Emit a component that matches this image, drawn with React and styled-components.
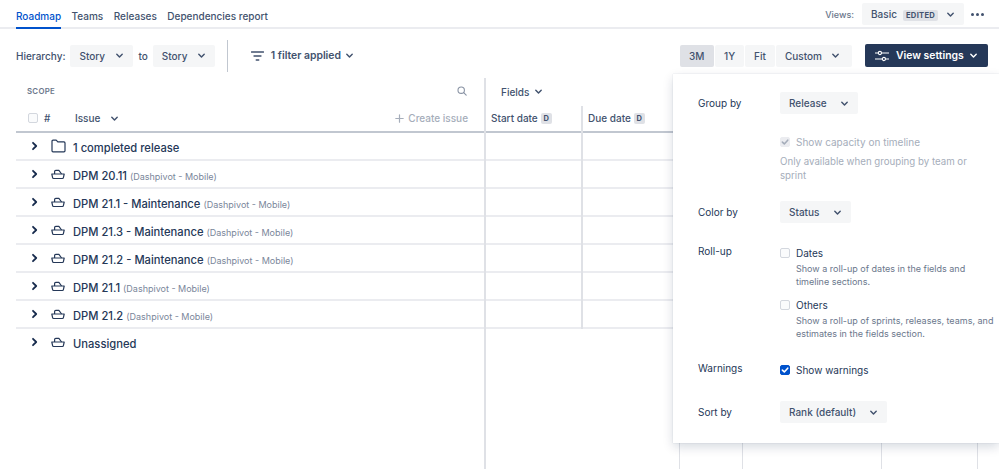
import React from 'react';
import styled, { createGlobalStyle } from 'styled-components';

const GlobalStyle = createGlobalStyle`
  html, body {
    margin: 0;
    padding: 0;
    background: #fff;
  }
  body {
    font-family: Inter, "Liberation Sans", sans-serif;
    color: #253858;
  }
`;

const Page = styled.div`
  position: relative;
  width: 999px;
  height: 469px;
  overflow: hidden;
`;

const TopBar = styled.div`
  display: flex;
  align-items: flex-start;
  justify-content: space-between;
  height: 29px;
  box-sizing: border-box;
  padding: 0 11px 0 16px;
  border-bottom: 2px solid #ebecf0;
`;

const Tabs = styled.div`
  display: flex;
  gap: 10.5px;
`;

const Tab = styled.div`
  height: 29px;
  box-sizing: border-box;
  padding-top: 9px;
  font-size: 10px;
  font-weight: 500;
  line-height: 14px;
  color: ${p => (p.$active ? '#0052cc' : '#42526e')};
  border-bottom: 2px solid ${p => (p.$active ? '#0052cc' : 'transparent')};
`;

const Views = styled.div`
  display: flex;
  align-items: center;
  padding-top: 3px;
`;

const ViewsLabel = styled.span`
  font-size: 9px;
  font-weight: 500;
  color: #6b778c;
  margin-right: 8px;
`;

const Select = styled.div`
  display: inline-flex;
  align-items: center;
  justify-content: space-between;
  box-sizing: border-box;
  width: ${p => p.$w}px;
  height: 22px;
  padding: 0 ${p => p.$pr || 9}px 0 9px;
  background: ${p => (p.$active ? '#dfe1e6' : '#f5f6f7')};
  border-radius: 2px;
  font-size: 10px;
  font-weight: 500;
  color: #42526e;
  white-space: nowrap;
`;

const Badge = styled.span`
  background: #dfe1e6;
  border-radius: 2px;
  padding: 1px 3px;
  font-size: 7.6px;
  font-weight: 700;
  letter-spacing: 0.3px;
  color: #42526e;
  margin-left: 6px;
`;

const More = styled.div`
  display: flex;
  gap: 2px;
  margin-left: 7px;
  margin-right: 4px;
  span {
    width: 3px;
    height: 3px;
    border-radius: 50%;
    background: #42526e;
  }
`;

const Toolbar = styled.div`
  display: flex;
  align-items: center;
  justify-content: space-between;
  height: 49px;
  padding: 4px 11px 0 16px;
  box-sizing: border-box;
`;

const Group = styled.div`
  display: flex;
  align-items: center;
`;

const Label = styled.span`
  font-size: 10px;
  font-weight: 500;
  color: #42526e;
  margin: 0 ${p => p.$mr || 0}px 0 ${p => p.$ml || 0}px;
`;

const Divider = styled.div`
  width: 1px;
  height: 32px;
  background: #c1c7d0;
  margin: 0 23px 0 12px;
`;

const FilterText = styled.span`
  font-size: 10.4px;
  font-weight: 600;
  color: #42526e;
  margin: 0 4px 0 7px;
`;

const Segments = styled.div`
  display: flex;
  gap: 1px;
  margin-right: 13px;
`;

const SettingsButton = styled.div`
  display: flex;
  align-items: center;
  box-sizing: border-box;
  width: 123px;
  height: 23px;
  padding: 0 10px;
  background: #253858;
  border-radius: 2px;
  color: #fff;
  font-size: 10.4px;
  font-weight: 600;
  white-space: nowrap;
  span {
    margin: 0 5px 0 7px;
  }
`;

const Board = styled.div`
  display: flex;
  padding-left: 16px;
  height: 391px;
`;

const ScopeColumn = styled.div`
  width: 468px;
  flex: none;
  border-right: 2px solid #dfe1e6;
`;

const FieldsColumn = styled.div`
  width: 193px;
  flex: none;
`;

const Timeline = styled.div`
  display: flex;
  flex: 1;
`;

const TimelineCell = styled.div`
  width: ${p => p.$w}px;
  flex: none;
  border-left: 1px solid #dfe1e6;
  box-sizing: border-box;
`;

const ScopeTitle = styled.div`
  display: flex;
  align-items: center;
  justify-content: space-between;
  height: 28px;
  padding: 0 17px 3px 11px;
  box-sizing: border-box;
  font-size: 7.8px;
  font-weight: 600;
  letter-spacing: 0.3px;
  color: #6b778c;
`;

const HeadRow = styled.div`
  display: flex;
  align-items: center;
  height: 27px;
  box-sizing: border-box;
  border-bottom: 2px solid #c1c7d0;
  padding: 0 16px 1px 12px;
`;

const CheckBox = styled.span`
  display: inline-flex;
  align-items: center;
  justify-content: center;
  flex: none;
  width: 10px;
  height: 10px;
  box-sizing: border-box;
  border: 1px solid ${p => (p.$on ? '#0052cc' : p.$off ? '#ebecf0' : '#d3d7de')};
  border-radius: 2px;
  background: ${p => (p.$on ? '#0052cc' : p.$off ? '#ebecf0' : '#fafbfc')};
`;

const Hash = styled.span`
  font-size: 10px;
  font-weight: 500;
  color: #42526e;
  margin-left: 6px;
  width: 31px;
`;

const IssueHead = styled.span`
  font-size: 10px;
  font-weight: 500;
  color: #42526e;
  margin-right: 10px;
`;

const CreateIssue = styled.span`
  display: flex;
  align-items: center;
  gap: 4px;
  margin-left: auto;
  font-size: 10px;
  font-weight: 500;
  color: #a5adba;
`;

const Row = styled.div`
  display: flex;
  align-items: center;
  height: 28px;
  box-sizing: border-box;
  border-bottom: 2px solid ${p => (p.$last ? 'transparent' : '#ebecf0')};
  padding: 4px 0 0 15px;
`;

const RowArrow = styled.span`
  display: inline-flex;
  margin-bottom: 4px;
`;

const RowIcon = styled.span`
  display: inline-flex;
  align-items: center;
  justify-content: center;
  width: 16px;
  margin: 0 7px 4px 11px;
`;

const RowText = styled.div`
  display: flex;
  align-items: baseline;
`;

const RowTitle = styled.span`
  font-size: 11.2px;
  font-weight: 500;
  color: #253858;
`;

const RowProject = styled.span`
  font-size: 9px;
  font-weight: 400;
  color: #7a869a;
  margin-left: 3px;
`;

const FieldsTitle = styled.div`
  display: flex;
  align-items: center;
  height: 28px;
  padding: 0 0 1px 15px;
  box-sizing: border-box;
  font-size: 10px;
  font-weight: 500;
  color: #42526e;
  span {
    margin-right: 5px;
  }
`;

const FieldsBody = styled.div`
  display: flex;
`;

const FieldCol = styled.div`
  width: ${p => p.$w}px;
  flex: none;
  border-right: ${p => (p.$last ? '0' : '2px solid #dfe1e6')};
`;

const FieldHead = styled.div`
  display: flex;
  align-items: center;
  height: 27px;
  box-sizing: border-box;
  border-bottom: 2px solid #c1c7d0;
  padding: 0 0 1px 5px;
  font-size: 10px;
  font-weight: 500;
  color: #42526e;
`;

const DBadge = styled.span`
  display: inline-flex;
  align-items: center;
  justify-content: center;
  width: 11px;
  height: 11px;
  border-radius: 2px;
  margin-left: 3px;
  background: #dfe1e6;
  font-size: 7.5px;
  font-weight: 700;
`;

const FieldCell = styled.div`
  height: 28px;
  box-sizing: border-box;
  border-bottom: 2px solid #ebecf0;
`;

const Panel = styled.div`
  position: absolute;
  top: 74px;
  left: 673px;
  width: 326px;
  height: 369px;
  box-sizing: border-box;
  padding: 18px 0 0 25px;
  background: #fff;
  box-shadow: 0 4px 10px rgba(9, 30, 66, 0.16), 0 0 1px rgba(9, 30, 66, 0.2);
`;

const PanelRow = styled.div`
  display: grid;
  grid-template-columns: 82px 1fr;
  margin-top: ${p => p.$mt || 0}px;
`;

const PanelLabel = styled.div`
  font-size: 10px;
  font-weight: 400;
  line-height: 22px;
  margin-top: ${p => p.$mt || 0}px;
  color: #253858;
`;

const CheckLine = styled.div`
  display: flex;
  align-items: center;
  gap: 6px;
  font-size: 10px;
  font-weight: 400;
  line-height: 14px;
  color: ${p => (p.$muted ? '#a5adba' : '#253858')};
`;

const Hint = styled.div`
  font-size: ${p => (p.$muted ? 9.7 : 9)}px;
  line-height: ${p => (p.$muted ? 13.5 : 13)}px;
  margin: ${p => p.$mt}px 0 0 ${p => p.$ml || 0}px;
  width: ${p => p.$width}px;
  color: ${p => (p.$muted ? '#a5adba' : '#6b778c')};
`;

const RollGap = styled.div`
  height: 10px;
`;

const Chevron = ({ size = 9, color = '#42526e', width = 1.6 }) => (
  <svg width={size} height={size} viewBox="0 0 10 10" fill="none">
    <path d="M2 3.6 5 6.6 8 3.6" stroke={color} strokeWidth={width} strokeLinecap="round" strokeLinejoin="round" />
  </svg>
);

const RowChevron = () => (
  <svg width="8" height="10" viewBox="0 0 8 10" fill="none">
    <path d="M2 1.8 5.2 5 2 8.2" stroke="#172b4d" strokeWidth="1.8" strokeLinecap="round" strokeLinejoin="round" />
  </svg>
);

const FolderIcon = () => (
  <svg width="15" height="14" viewBox="0 0 15 14" fill="none">
    <path d="M1 2.2a1 1 0 0 1 1-1h3.2l1.6 1.7H13a1 1 0 0 1 1 1v7.9a1 1 0 0 1-1 1H2a1 1 0 0 1-1-1z" stroke="#253858" strokeWidth="1.2" strokeLinejoin="round" />
  </svg>
);

const ShipIcon = () => (
  <svg width="14" height="11" viewBox="0 0 14 11" fill="none">
    <path d="M3.6 5V2.6a1.2 1.2 0 0 1 1.2-1.2h3.1L10.6 5" stroke="#253858" strokeWidth="1.2" strokeLinejoin="round" />
    <path d="M.8 5h12.4l-.8 3.7a1 1 0 0 1-1 .8H2.6a1 1 0 0 1-1-.8z" stroke="#253858" strokeWidth="1.2" strokeLinejoin="round" />
  </svg>
);

const FilterIcon = () => (
  <svg width="13" height="10" viewBox="0 0 13 10" fill="none">
    <path d="M.5 1h12M3 5h7M5.2 9h2.6" stroke="#42526e" strokeWidth="1.3" strokeLinecap="round" />
  </svg>
);

const SlidersIcon = () => (
  <svg width="14" height="12" viewBox="0 0 14 12" fill="none">
    <path d="M.5 3h2.5M6.8 3h6.7M.5 9h6.5M10.8 9h2.7" stroke="#fff" strokeWidth="1.2" strokeLinecap="round" />
    <circle cx="4.9" cy="3" r="1.6" stroke="#fff" strokeWidth="1.1" />
    <circle cx="8.9" cy="9" r="1.6" stroke="#fff" strokeWidth="1.1" />
  </svg>
);

const SearchIcon = () => (
  <svg width="10" height="10" viewBox="0 0 10 10" fill="none">
    <circle cx="4.2" cy="4.2" r="3.2" stroke="#8993a4" strokeWidth="1.1" />
    <path d="M6.7 6.7 9.2 9.2" stroke="#8993a4" strokeWidth="1.1" strokeLinecap="round" />
  </svg>
);

const PlusIcon = () => (
  <svg width="9" height="9" viewBox="0 0 9 9" fill="none">
    <path d="M4.5.8v7.4M.8 4.5h7.4" stroke="#a5adba" strokeWidth="1.2" strokeLinecap="round" />
  </svg>
);

const Tick = ({ color = '#fff' }) => (
  <svg width="8" height="8" viewBox="0 0 7 7" fill="none">
    <path d="M1.2 3.6 2.9 5.2 5.9 1.9" stroke={color} strokeWidth="1.4" strokeLinecap="round" strokeLinejoin="round" />
  </svg>
);

const rows = [
  { title: '1 completed release', folder: true },
  { title: 'DPM 20.11', project: true },
  { title: 'DPM 21.1 - Maintenance', project: true },
  { title: 'DPM 21.3 - Maintenance', project: true },
  { title: 'DPM 21.2 - Maintenance', project: true },
  { title: 'DPM 21.1', project: true },
  { title: 'DPM 21.2', project: true },
  { title: 'Unassigned', last: true },
];

const cells = rows.slice(0, 7);

const App = () => (
  <Page>
    <GlobalStyle />
    <TopBar>
      <Tabs>
        <Tab $active>Roadmap</Tab>
        <Tab>Teams</Tab>
        <Tab>Releases</Tab>
        <Tab>Dependencies report</Tab>
      </Tabs>
      <Views>
        <ViewsLabel>Views:</ViewsLabel>
        <Select $w={102}>
          <span>
            Basic<Badge>EDITED</Badge>
          </span>
          <Chevron />
        </Select>
        <More>
          <span />
          <span />
          <span />
        </More>
      </Views>
    </TopBar>

    <Toolbar>
      <Group>
        <Label $mr={5}>Hierarchy:</Label>
        <Select $w={63}>
          Story <Chevron />
        </Select>
        <Label $ml={5} $mr={5}>
          to
        </Label>
        <Select $w={62}>
          Story <Chevron />
        </Select>
        <Divider />
        <FilterIcon />
        <FilterText>1 filter applied</FilterText>
        <Chevron />
      </Group>
      <Group>
        <Segments>
          <Select $w={34} $active>
            3M
          </Select>
          <Select $w={29}>1Y</Select>
          <Select $w={30}>Fit</Select>
          <Select $w={76} $pr={12}>
            Custom <Chevron />
          </Select>
        </Segments>
        <SettingsButton>
          <SlidersIcon />
          <span>View settings</span>
          <Chevron color="#fff" />
        </SettingsButton>
      </Group>
    </Toolbar>

    <Board>
      <ScopeColumn>
        <ScopeTitle>
          SCOPE
          <SearchIcon />
        </ScopeTitle>
        <HeadRow>
          <CheckBox />
          <Hash>#</Hash>
          <IssueHead>Issue</IssueHead>
          <Chevron />
          <CreateIssue>
            <PlusIcon />
            Create issue
          </CreateIssue>
        </HeadRow>
        {rows.map(row => (
          <Row key={row.title} $last={row.last}>
            <RowArrow>
              <RowChevron />
            </RowArrow>
            <RowIcon>{row.folder ? <FolderIcon /> : <ShipIcon />}</RowIcon>
            <RowText>
              <RowTitle>{row.title}</RowTitle>
              {row.project && <RowProject>(Dashpivot - Mobile)</RowProject>}
            </RowText>
          </Row>
        ))}
      </ScopeColumn>

      <FieldsColumn>
        <FieldsTitle>
          <span>Fields</span>
          <Chevron />
        </FieldsTitle>
        <FieldsBody>
          <FieldCol $w={95}>
            <FieldHead>
              Start date<DBadge>D</DBadge>
            </FieldHead>
            {cells.map(row => (
              <FieldCell key={row.title} />
            ))}
          </FieldCol>
          <FieldCol $w={96} $last>
            <FieldHead>
              Due date<DBadge>D</DBadge>
            </FieldHead>
            {cells.map(row => (
              <FieldCell key={row.title} />
            ))}
          </FieldCol>
        </FieldsBody>
      </FieldsColumn>

      <Timeline>
        <TimelineCell $w={63} />
        <TimelineCell $w={139} />
        <TimelineCell $w={96} />
        <TimelineCell $w={22} />
      </Timeline>
    </Board>

    <Panel>
      <PanelRow>
        <PanelLabel>Group by</PanelLabel>
        <Select $w={78}>
          Release <Chevron />
        </Select>
      </PanelRow>
      <PanelRow $mt={21}>
        <div />
        <div>
          <CheckLine $muted>
            <CheckBox $off>
              <Tick color="#a5adba" />
            </CheckBox>
            Show capacity on timeline
          </CheckLine>
          <Hint $muted $mt={6} $width={200}>
            Only available when grouping by team or sprint
          </Hint>
        </div>
      </PanelRow>
      <PanelRow $mt={19}>
        <PanelLabel>Color by</PanelLabel>
        <Select $w={71}>
          Status <Chevron />
        </Select>
      </PanelRow>
      <PanelRow $mt={23}>
        <PanelLabel $mt={-6}>Roll-up</PanelLabel>
        <div>
          <CheckLine>
            <CheckBox />
            Dates
          </CheckLine>
          <Hint $mt={2} $ml={16} $width={199}>
            Show a roll-up of dates in the fields and timeline sections.
          </Hint>
          <RollGap />
          <CheckLine>
            <CheckBox />
            Others
          </CheckLine>
          <Hint $mt={2} $ml={16} $width={199}>
            Show a roll-up of sprints, releases, teams, and estimates in the fields section.
          </Hint>
        </div>
      </PanelRow>
      <PanelRow $mt={21}>
        <PanelLabel $mt={-4}>Warnings</PanelLabel>
        <CheckLine>
          <CheckBox $on>
            <Tick />
          </CheckBox>
          Show warnings
        </CheckLine>
      </PanelRow>
      <PanelRow $mt={22}>
        <PanelLabel>Sort by</PanelLabel>
        <Select $w={107}>
          Rank (default) <Chevron />
        </Select>
      </PanelRow>
    </Panel>
  </Page>
);

export default App;
